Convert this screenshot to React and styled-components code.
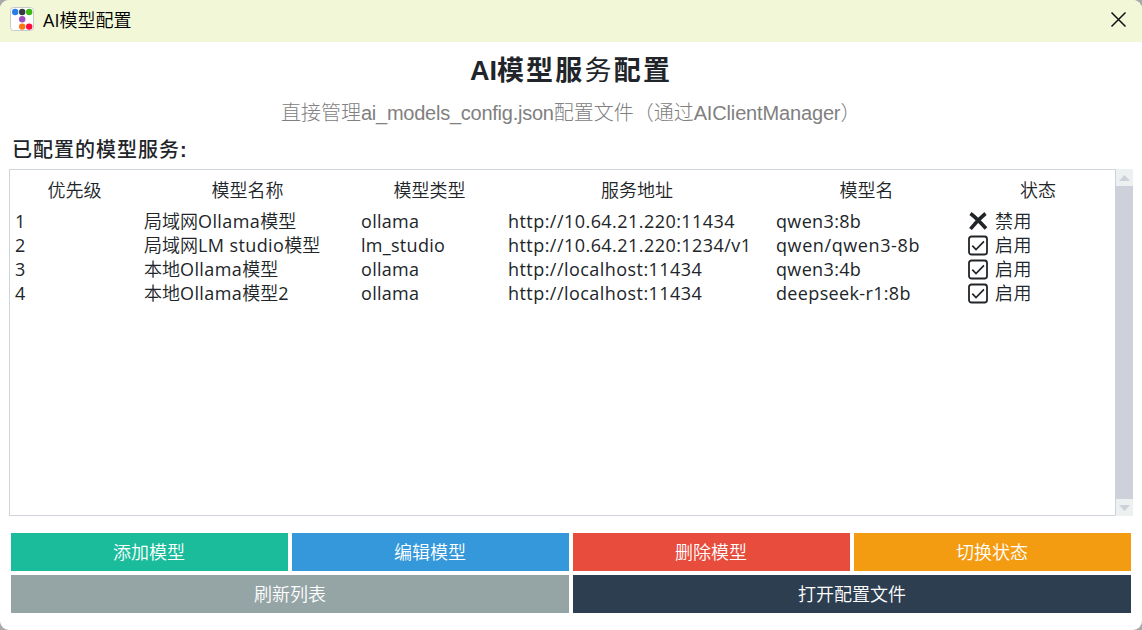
import React from "react";
import styled, { createGlobalStyle } from "styled-components";

const GlobalStyle = createGlobalStyle`
  * { box-sizing: border-box; }
  body { margin: 0; background: #a9a9a9; }
`;

const Window = styled.div`
  width: 1142px;
  height: 630px;
  display: flex;
  flex-direction: column;
  overflow: hidden;
  border-radius: 9px;
  background: #fff;
  color: #212529;
  font: 350 18px/24px "Open Sans", "Noto Sans CJK SC", sans-serif;
  white-space: nowrap;
`;

const TitleBar = styled.header`
  flex: none;
  height: 42px;
  display: flex;
  align-items: center;
  padding: 0 15px 3px 10px;
  background: #f2f8d7;
  color: #000;
`;

const Caption = styled.span`
  flex: 1;
  margin-left: 8px;
  font-size: 18px;
`;

const CloseButton = styled.button`
  width: 17px;
  height: 17px;
  padding: 0;
  border: 0;
  background: none;
  display: flex;
`;

const Heading = styled.h1`
  flex: none;
  margin: 12px 0 0;
  height: 34px;
  text-align: center;
  font: bold 27px/34px "Liberation Sans", "Noto Sans CJK SC", sans-serif;
`;

const Subtitle = styled.p`
  flex: none;
  margin: 11px 0 0;
  height: 28px;
  padding-left: 281px;
  color: #808080;
  font: 300 20px/28px "Liberation Sans", "Noto Sans CJK SC", sans-serif;
`;

const SectionLabel = styled.h2`
  flex: none;
  margin: 8px 0 0;
  height: 30px;
  padding-left: 12px;
  font: 500 20px/30px "Liberation Sans", "Noto Sans CJK SC", sans-serif;
  letter-spacing: 1px;
`;

const Spaced = styled.span`
  letter-spacing: ${(p) => p.$by}px;
  font-weight: ${(p) => p.$weight || "inherit"};
`;

const Colon = styled.span`
  font-weight: bold;
`;

const TableArea = styled.section`
  flex: none;
  display: flex;
  height: 347px;
  margin: 4px 9px 0;
`;

const Table = styled.div`
  width: 1107px;
  border: 1px solid #ced4da;
  border-right-color: #ced1da;
  border-radius: 1px;
`;

const Row = styled.div`
  display: grid;
  grid-template-columns: 129px 217px 147px 268px 191px 152px;
  height: 24px;
  line-height: 24px;
`;

const HeaderRow = styled(Row)`
  height: 39px;
  line-height: 40px;
  text-align: center;
`;

const Cell = styled.div`
  display: flex;
  align-items: center;
  padding-left: 5px;
`;

const LatinCell = styled(Cell)`
  font-weight: 400;
  letter-spacing: ${(p) => p.$tracking || 0}px;
`;

const Status = styled.span`
  display: flex;
  align-items: center;
  gap: 7px;
  padding-left: 1px;
  letter-spacing: 0.5px;
`;

const ScrollBar = styled.div`
  width: 17px;
  display: flex;
  flex-direction: column;
  background: #ced1da;
`;

const ScrollArrow = styled.div`
  height: 17px;
  display: flex;
  align-items: center;
  justify-content: center;
  background: #ecf0f1;
`;

const ScrollThumb = styled.div`
  flex: 1;
`;

const Actions = styled.footer`
  display: grid;
  grid-template-columns: repeat(4, 277px);
  grid-auto-rows: 38px;
  gap: 4px;
  margin: 17px 0 0 11px;
`;

const ActionButton = styled.button`
  grid-column: span ${(p) => p.$span || 1};
  padding: 0 ${(p) => (p.$span ? 0 : 1)}px 0 0;
  border: 0;
  background: ${(p) => p.$color};
  color: #fff;
  font: inherit;
`;

const AppIcon = () => (
  <svg width="25" height="25" viewBox="0 0 25 25">
    <rect x="0.5" y="0.5" width="23" height="23" rx="3" fill="#fff" stroke="#c9c9c9" />
    <circle cx="5.2" cy="5" r="3.2" fill="#2a7fe6" />
    <circle cx="12.2" cy="5" r="3.2" fill="#343a40" />
    <circle cx="19.2" cy="5" r="3.2" fill="#3cb815" />
    <circle cx="12.2" cy="12.3" r="3.2" fill="#9b4fc0" />
    <circle cx="12.2" cy="19.6" r="3.2" fill="#fd7414" />
    <circle cx="19.2" cy="19.6" r="3.2" fill="#ff0a3c" />
  </svg>
);

const CloseIcon = () => (
  <svg width="17" height="17" viewBox="0 0 17 17" stroke="#111" strokeWidth="1.5">
    <path d="M1.5 1.5 15.5 15.5M15.5 1.5 1.5 15.5" />
  </svg>
);

const CrossIcon = () => (
  <svg width="20" height="20" viewBox="0 0 20 20" fill="none" stroke="#212529" strokeWidth="3.6">
    <path d="M2.5 2.5Q9 7.5 18 17.5M17.5 2.5Q10 8.5 2.5 18" />
  </svg>
);

const CheckedIcon = () => (
  <svg width="20" height="21" viewBox="0 0 20 21" fill="none" stroke="#212529">
    <rect x="1" y="1.5" width="18" height="18" rx="2.5" strokeWidth="1.8" />
    <path d="M4.3 10.7 8 14.5 16 6.3" strokeWidth="1.7" />
  </svg>
);

const Triangle = ({ down }) => (
  <svg width="11" height="6" viewBox="0 0 11 6" fill="#ced1da">
    <path d={down ? "M0 0H11L5.5 6Z" : "M0 6H11L5.5 0Z"} />
  </svg>
);

const columns = ["优先级", "模型名称", "模型类型", "服务地址", "模型名", "状态"];

const models = [
  { name: ["局域网", "Ollama", "模型"], type: "ollama", url: "http://10.64.21.220:11434", model: "qwen3:8b", on: false },
  { name: ["局域网", "LM studio", "模型"], type: "lm_studio", url: "http://10.64.21.220:1234/v1", model: "qwen/qwen3-8b", on: true },
  { name: ["本地", "Ollama", "模型"], type: "ollama", url: "http://localhost:11434", model: "qwen3:4b", on: true },
  { name: ["本地", "Ollama", "模型", "2"], type: "ollama", url: "http://localhost:11434", model: "deepseek-r1:8b", on: true },
];

const actions = [
  { label: "添加模型", color: "#1abc9c" },
  { label: "编辑模型", color: "#3498db" },
  { label: "删除模型", color: "#e74c3c" },
  { label: "切换状态", color: "#f39c12" },
  { label: "刷新列表", color: "#95a5a6", span: 2 },
  { label: "打开配置文件", color: "#2c3e50", span: 2 },
];

export default function App() {
  return (
    <Window>
      <GlobalStyle />
      <TitleBar>
        <AppIcon />
        <Caption><Spaced $by={0} $weight={400}>AI</Spaced>模型配置</Caption>
        <CloseButton aria-label="关闭"><CloseIcon /></CloseButton>
      </TitleBar>
      <Heading>
        AI<Spaced $by={2.2}>模型服<Spaced $by={2.2} $weight={400}>务</Spaced>配置</Spaced>
      </Heading>
      <Subtitle>
        直接管理<Spaced $by={-0.25}>ai_models_config.json</Spaced>配置文件（通过
        <Spaced $by={-0.15}>AIClientManager</Spaced>）
      </Subtitle>
      <SectionLabel>已配置的模型服务<Colon>:</Colon></SectionLabel>
      <TableArea>
        <Table>
          <HeaderRow>
            {columns.map((c) => <div key={c}>{c}</div>)}
          </HeaderRow>
          {models.map((m, i) => (
            <Row key={i}>
              <LatinCell>{i + 1}</LatinCell>
              <Cell>
                {m.name[0]}
                <Spaced $by={0.4} $weight={400}>{m.name[1]}</Spaced>
                {m.name[2]}
                {m.name[3] && <Spaced $by={0} $weight={400}>{m.name[3]}</Spaced>}
              </Cell>
              <LatinCell $tracking={0.3}>{m.type}</LatinCell>
              <LatinCell $tracking={0.45}>{m.url}</LatinCell>
              <LatinCell $tracking={i === 1 ? 0.6 : 0.35}>{m.model}</LatinCell>
              <Cell>
                <Status>
                  {m.on ? <CheckedIcon /> : <CrossIcon />}
                  {m.on ? "启用" : "禁用"}
                </Status>
              </Cell>
            </Row>
          ))}
        </Table>
        <ScrollBar>
          <ScrollArrow><Triangle /></ScrollArrow>
          <ScrollThumb />
          <ScrollArrow><Triangle down /></ScrollArrow>
        </ScrollBar>
      </TableArea>
      <Actions>
        {actions.map((a) => (
          <ActionButton key={a.label} $color={a.color} $span={a.span}>{a.label}</ActionButton>
        ))}
      </Actions>
    </Window>
  );
}
